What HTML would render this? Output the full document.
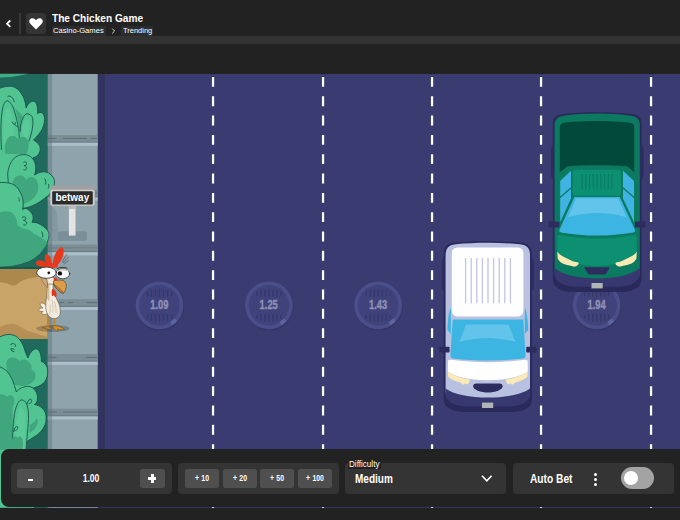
<!DOCTYPE html>
<html>
<head>
<meta charset="utf-8">
<title>The Chicken Game</title>
<style>
*{box-sizing:border-box;margin:0;padding:0}
html,body{width:680px;height:520px;overflow:hidden;background:#222222;font-family:"Liberation Sans",sans-serif;color:#fff}
.abs{position:absolute}
#game{position:absolute;left:0;top:0;width:680px;height:520px}
/* header */
#hdr{position:absolute;left:0;top:0;width:680px;height:36px;background:#222222}
#band{position:absolute;left:0;top:36px;width:680px;height:8px;background:#333333}
#divider{position:absolute;left:19px;top:13px;width:2px;height:21px;background:#393939}
#fav{position:absolute;left:26px;top:13px;width:20px;height:21px;background:#343434;border-radius:3px}
#title{position:absolute;left:52px;top:12px;font-size:11px;font-weight:bold;line-height:13px;white-space:nowrap;transform-origin:0 0;transform:scaleX(.92)}
.crumb{position:absolute;top:26px;height:9.5px;background:#2d2d2d;font-size:8px;line-height:10px;white-space:nowrap;color:#fff}
.crumb span{display:inline-block;transform-origin:0 0}
/* panel */
#panel{position:absolute;left:1px;top:449px;width:700px;height:58px;background:#222222;border-radius:8px}
.grp{position:absolute;top:463px;height:31px;background:#343434;border-radius:4px}
.btn{position:absolute;top:469px;height:19px;background:#4f4f4f;border-radius:2.5px}
.cond{position:absolute;white-space:nowrap;font-weight:bold;transform-origin:50% 50%}
</style>
</head>
<body>
<svg id="game" viewBox="0 0 680 520">
<defs>
<clipPath id="gclip"><rect x="0" y="73.8" width="680" height="433.9"/></clipPath>
</defs>
<g clip-path="url(#gclip)">
<!-- road -->
<rect x="0" y="74" width="680" height="434" fill="#3a3b70"/>
<rect x="97.5" y="74" width="7.5" height="434" fill="#32335f"/>
<!-- lane dashes -->
<g stroke="#ffffff" stroke-width="2.25" stroke-dasharray="9.9 9.43" fill="none">
<path d="M213.05 76.9V520"/><path d="M323.05 76.9V520"/><path d="M432.05 76.9V520"/><path d="M541.05 76.9V520"/><path d="M651.05 76.9V520"/>
</g>
<!-- manholes -->
<g transform="translate(159.5 305.3)">
<circle cx="0.5" cy="1" r="24.2" fill="#30315f" opacity=".55"/>
<circle cx="0" cy="0" r="23.9" fill="#4a4e8a"/>
<circle cx="0" cy="0" r="20.2" fill="#3f427b"/>
<path d="M12.5 19.9A23.5 23.5 0 0 0 17.6 15.6L15 13A19.8 19.8 0 0 1 10.6 16.8Z" fill="#5d62a0"/>
<g stroke="#343767" stroke-width="1.1">
<path d="M-12 -13.5V-9.5M-8 -15.5V-8.5M-4 -16V-8.5M0 -16.5V-8.5M4 -16V-8.5M8 -15.5V-8.5M12 -13.5V-9.5"/>
<path d="M-12 9.5V13.5M-8 8.5V15.5M-4 8.5V16M0 8.5V16.5M4 8.5V16M8 8.5V15.5M12 9.5V13.5"/>
</g>
</g>
<g transform="translate(268.9 305.3)">
<circle cx="0.5" cy="1" r="24.2" fill="#30315f" opacity=".55"/>
<circle cx="0" cy="0" r="23.9" fill="#4a4e8a"/>
<circle cx="0" cy="0" r="20.2" fill="#3f427b"/>
<path d="M12.5 19.9A23.5 23.5 0 0 0 17.6 15.6L15 13A19.8 19.8 0 0 1 10.6 16.8Z" fill="#5d62a0"/>
<g stroke="#343767" stroke-width="1.1">
<path d="M-12 -13.5V-9.5M-8 -15.5V-8.5M-4 -16V-8.5M0 -16.5V-8.5M4 -16V-8.5M8 -15.5V-8.5M12 -13.5V-9.5"/>
<path d="M-12 9.5V13.5M-8 8.5V15.5M-4 8.5V16M0 8.5V16.5M4 8.5V16M8 8.5V15.5M12 9.5V13.5"/>
</g>
</g>
<g transform="translate(378.2 305.3)">
<circle cx="0.5" cy="1" r="24.2" fill="#30315f" opacity=".55"/>
<circle cx="0" cy="0" r="23.9" fill="#4a4e8a"/>
<circle cx="0" cy="0" r="20.2" fill="#3f427b"/>
<path d="M12.5 19.9A23.5 23.5 0 0 0 17.6 15.6L15 13A19.8 19.8 0 0 1 10.6 16.8Z" fill="#5d62a0"/>
<g stroke="#343767" stroke-width="1.1">
<path d="M-12 -13.5V-9.5M-8 -15.5V-8.5M-4 -16V-8.5M0 -16.5V-8.5M4 -16V-8.5M8 -15.5V-8.5M12 -13.5V-9.5"/>
<path d="M-12 9.5V13.5M-8 8.5V15.5M-4 8.5V16M0 8.5V16.5M4 8.5V16M8 8.5V15.5M12 9.5V13.5"/>
</g>
</g>
<g transform="translate(596.7 305.3)">
<circle cx="0.5" cy="1" r="24.2" fill="#30315f" opacity=".55"/>
<circle cx="0" cy="0" r="23.9" fill="#4a4e8a"/>
<circle cx="0" cy="0" r="20.2" fill="#3f427b"/>
<path d="M12.5 19.9A23.5 23.5 0 0 0 17.6 15.6L15 13A19.8 19.8 0 0 1 10.6 16.8Z" fill="#5d62a0"/>
<g stroke="#343767" stroke-width="1.1">
<path d="M-12 -13.5V-9.5M-8 -15.5V-8.5M-4 -16V-8.5M0 -16.5V-8.5M4 -16V-8.5M8 -15.5V-8.5M12 -13.5V-9.5"/>
<path d="M-12 9.5V13.5M-8 8.5V15.5M-4 8.5V16M0 8.5V16.5M4 8.5V16M8 8.5V15.5M12 9.5V13.5"/>
</g>
</g>
<g font-family="Liberation Sans, sans-serif" font-weight="bold" font-size="12" fill="#8f90b5" stroke="#8f90b5" stroke-width=".4" text-anchor="middle">
<text transform="translate(159.4 309.4) scale(.78 1)">1.09</text>
<text transform="translate(268.7 309.4) scale(.78 1)">1.25</text>
<text transform="translate(378.1 309.4) scale(.78 1)">1.43</text>
<text transform="translate(596.6 309.4) scale(.78 1)">1.94</text>
</g>
<!-- green truck -->
<g id="truck">
<path d="M552.8 124C552.8 117.6 556 114.8 563 114C585 111.6 610 111.6 632 114C638.5 114.8 641.6 117.6 641.6 124V279C641.6 287 634 291.6 622 292H572C560 291.6 552.8 287 552.8 279Z" fill="#292a5a"/>
<path d="M550.8 150C550.8 146 553 145 555 146V178C553 179 550.8 178 550.8 174Z" fill="#2c2d5e"/>
<path d="M643.6 150C643.6 146 641.4 145 639.4 146V178C641.4 179 643.6 178 643.6 174Z" fill="#2c2d5e"/>
<path d="M554.6 125C554.6 119.5 557.5 116.6 563.5 115.7C585 112.8 610 112.8 631 115.7C637 116.6 639.8 119.5 639.8 125V272C639.8 280 632 284 620 284.5H574C562 284 554.6 280 554.6 272Z" fill="#0b7a61"/>
<path d="M559.8 128C559.8 124.5 561.5 123 565 122.6C586 120.6 608 120.6 629 122.6C632.5 123 634.2 124.5 634.2 128V172.3L627 166.2C610 164.8 584 164.8 567.5 166.2L559.8 172.3Z" fill="#02493b"/>
<rect x="572.7" y="169.7" width="48.4" height="26" rx="3" fill="#0d8f71"/>
<path d="M582.20 174V189.6M585.93 174V189.6M589.65 174V189.6M593.38 174V189.6M597.10 174V189.6M600.83 174V189.6M604.55 174V189.6M608.28 174V189.6M612.00 174V189.6" stroke="#0b7b62" stroke-width="1.1" fill="none"/>
<path d="M560.2 181L571 170.8V187L560.2 196.4Z" fill="#3fb4e2"/>
<path d="M560.2 198.2L571 188.8V198.6L560.2 222Z" fill="#3fb4e2"/>
<path d="M634 181L623 170.8V187L634 196.4Z" fill="#3fb4e2"/>
<path d="M634 198.2L623 188.8V198.6L634 222Z" fill="#3fb4e2"/>
<path d="M574.4 197H619.8L635 229.8C635.5 231.2 634.9 232.1 633.4 232.4C610 236.5 584 236.5 561 232.4C559.5 232.1 558.9 231.2 559.4 229.8Z" fill="#3db5e3"/>
<path d="M576 198.6H618.2L626.5 217.2C607 211.6 588 211.6 568 217.2Z" fill="#63c4eb"/>
<rect x="548.4" y="221.6" width="11" height="5.8" rx="1" fill="#2c2d5e"/>
<rect x="634.8" y="221.6" width="11" height="5.8" rx="1" fill="#2c2d5e"/>
<path d="M557.3 237C557.3 235.5 558.5 234.7 560 235C584 239.8 610 239.8 634 235C635.5 234.7 636.8 235.5 636.8 237V254C630 262 610 266 597 266C584 266 564 262 557.3 254Z" fill="#0d9071"/>
<path d="M557.3 251.7C559.5 254.5 562 256.3 565 257.5C568 258.8 570.5 260 572.7 261.3C575 262 577 262.3 578.5 262.7C578.8 264 578.3 264.8 577.5 265.2C576.5 266.2 575.5 266.6 574.6 266.5C573 266.5 572 266.2 570.8 265.8C567.5 265.4 564.5 264.5 562.1 263.3C560 262 558.5 260.3 557.7 258.5Z" fill="#fbe9b4"/>
<path d="M636.8 251.7C634.6 254.5 632.1 256.3 629.1 257.5C626.1 258.8 623.6 260.0 621.4 261.3C619.1 262.0 617.1 262.3 615.6 262.7C615.3 264.0 615.8 264.8 616.6 265.2C617.6 266.2 618.6 266.6 619.5 266.5C621.1 266.5 622.1 266.2 623.3 265.8C626.6 265.4 629.6 264.5 632.0 263.3C634.1 262.0 635.6 260.3 636.4 258.5Z" fill="#fbe9b4"/>
<path d="M584.2 267.2H609.8L606.4 273.2C606 274 605.4 274.4 604.5 274.4H589.5C588.6 274.4 588 274 587.6 273.2Z" fill="#2c2d5e"/>
<path d="M554.6 268C562 275 580 278.5 597.2 278.5C614 278.5 632 275 639.8 268V274C639.8 282 630 286.6 618 286.8H576C564 286.6 554.6 282 554.6 274Z" fill="#37386f"/>
<rect x="591.5" y="283" width="11.2" height="5.4" fill="#aeb4b8"/>
</g>
<!-- white van -->
<g id="van">
<path d="M443.6 254C443.6 247.3 447 243.4 455 242.6C476 240.9 500 240.9 520 242.6C528.5 243.4 532 247.3 532 254V399C532 407.5 524 411.6 512 412H464C452 411.6 443.6 407.5 443.6 399Z" fill="#292a5a"/>
<path d="M441.8 262C441.8 258 444 257 446 258V290C444 291 441.8 290 441.8 286Z" fill="#2c2d5e"/>
<path d="M533.8 262C533.8 258 531.6 257 529.6 258V290C531.6 291 533.8 290 533.8 286Z" fill="#2c2d5e"/>
<path d="M445.6 255C445.6 248.5 448.5 245 455.5 244.2C476 242.2 500 242.2 520 244.2C527 245 530 248.5 530 255V392C530 400 522 404 510 404.5H466C454 404 445.6 400 445.6 392Z" fill="#b9c1e1"/>
<rect x="451.8" y="247.4" width="71.6" height="69" rx="5.5" fill="#ffffff"/>
<path d="M465.60 258V303.3M471.20 258V303.3M476.80 258V303.3M482.40 258V303.3M488.00 258V303.3M493.60 258V303.3M499.20 258V303.3M504.80 258V303.3M510.40 258V303.3" stroke="#c1c7e5" stroke-width="1.35" fill="none"/>
<path d="M447.4 330C447.6 320 448.8 312 450.8 307.5V334Z" fill="#3db5e3"/>
<path d="M528.2 330C528 320 526.8 312 524.8 307.5V334Z" fill="#3db5e3"/>
<path d="M452.7 319.5H523.3L525.6 355.5C525.7 357.3 525 358.2 523.3 358.4C500 361.2 476 361.2 452.7 358.4C451 358.2 450.3 357.3 450.4 355.5Z" fill="#3db5e3"/>
<path d="M466 324.6H508.5L515.5 342C498 336.6 478 336.6 459.5 342Z" fill="#63c4eb"/>
<rect x="439.2" y="346.8" width="10.4" height="5.8" rx="1" fill="#2c2d5e"/>
<rect x="526.2" y="346.8" width="10.4" height="5.8" rx="1" fill="#2c2d5e"/>
<path d="M447.9 362C447.9 360.4 449 359.6 450.6 359.8C476 363 500 363 525 359.8C526.6 359.6 527.7 360.4 527.7 362V371.6C520.6 376.5 507.6 380.2 487.8 380.2C468 380.2 455 376.5 447.9 371.6Z" fill="#ffffff"/>
<path d="M447.9 371.6C451.5 374.3 458 377.3 465 378.7L469.7 379.6C469.8 381 469.4 381.6 469.3 381.6C468.8 383.6 468 384.3 467.4 384.2C466.4 384.2 465.6 383.6 465.1 383.2C464.4 384.2 463.6 384.5 462.8 384.4C461.8 384 461 383 460.5 382.4C457.5 381.8 455 380.8 453.5 380C451 378.8 449 377.6 448.1 376.7Z" fill="#fbe9b8"/>
<path d="M527.7 371.6C524.1 374.3 517.6 377.3 510.6 378.7L505.9 379.6C505.8 381.0 506.2 381.6 506.3 381.6C506.8 383.6 507.6 384.3 508.2 384.2C509.2 384.2 510.0 383.6 510.5 383.2C511.2 384.2 512.0 384.5 512.8 384.4C513.8 384.0 514.6 383.0 515.1 382.4C518.1 381.8 520.6 380.8 522.1 380.0C524.6 378.8 526.6 377.6 527.5 376.7Z" fill="#fbe9b8"/>
<path d="M476.3 383.6H499.5C501.5 383.6 502.6 384.8 502.6 386.2C502.6 388 501 389.4 498.5 390.4C495 391.8 491 392.5 487.9 392.5C484.8 392.5 480.8 391.8 477.3 390.4C474.8 389.4 473.2 388 473.2 386.2C473.2 384.8 474.3 383.6 476.3 383.6Z" fill="#2c2d5e"/>
<path d="M445.6 388.5C453 394.5 471 397.6 487.8 397.6C504.6 397.6 522.6 394.5 530 388.5V394.5C530 402 520 406.3 508 406.5H468C456 406.3 445.6 402 445.6 394.5Z" fill="#37386f"/>
<rect x="482" y="402.6" width="11.2" height="5.4" fill="#aeb4b8"/>
</g>
<!-- sidewalk -->
<rect x="47.5" y="74" width="50.2" height="434" fill="#8ea3ab"/>
<rect x="47.5" y="135.0" width="50.2" height="7.6" fill="#7b8e95"/><rect x="47.5" y="141.7" width="50.2" height="1" fill="#66777e"/><rect x="47.5" y="142.7" width="50.2" height="3.2" fill="#aabfc9"/><rect x="48" y="137.9" width="8.4" height="1" fill="#5f7077" opacity="1"/><rect x="63" y="137.9" width="24.0" height="1" fill="#5f7077" opacity="1"/><rect x="90.8" y="137.9" width="6.8" height="1" fill="#5f7077" opacity="1"/>
<rect x="47.5" y="189.7" width="50.2" height="7.6" fill="#7b8e95"/><rect x="47.5" y="196.4" width="50.2" height="1" fill="#66777e"/><rect x="47.5" y="197.4" width="50.2" height="3.2" fill="#aabfc9"/><rect x="47.5" y="192.6" width="8.5" height="1" fill="#5f7077" opacity="1"/><rect x="62" y="192.6" width="18.0" height="1" fill="#5f7077" opacity="1"/><rect x="88" y="192.6" width="9.6" height="1" fill="#5f7077" opacity="1"/>
<rect x="47.5" y="244.5" width="50.2" height="7.6" fill="#7b8e95"/><rect x="47.5" y="251.2" width="50.2" height="1" fill="#66777e"/><rect x="47.5" y="252.2" width="50.2" height="3.2" fill="#aabfc9"/><rect x="47.5" y="247.4" width="50.1" height="1" fill="#5f7077" opacity=".45"/>
<rect x="47.5" y="299.2" width="50.2" height="7.6" fill="#7b8e95"/><rect x="47.5" y="305.9" width="50.2" height="1" fill="#66777e"/><rect x="47.5" y="306.9" width="50.2" height="3.2" fill="#aabfc9"/><rect x="47.5" y="302.1" width="16.4" height="1" fill="#5f7077" opacity="1"/><rect x="68" y="302.1" width="5.6" height="1" fill="#5f7077" opacity="1"/><rect x="86.2" y="302.1" width="11.4" height="1" fill="#5f7077" opacity="1"/>
<rect x="47.5" y="354.0" width="50.2" height="7.6" fill="#7b8e95"/><rect x="47.5" y="360.7" width="50.2" height="1" fill="#66777e"/><rect x="47.5" y="361.7" width="50.2" height="3.2" fill="#aabfc9"/><rect x="47.5" y="356.9" width="9.0" height="1" fill="#5f7077" opacity="1"/><rect x="86" y="356.9" width="11.5" height="1" fill="#5f7077" opacity="1"/>
<rect x="47.5" y="408.7" width="50.2" height="7.6" fill="#7b8e95"/><rect x="47.5" y="415.4" width="50.2" height="1" fill="#66777e"/><rect x="47.5" y="416.4" width="50.2" height="3.2" fill="#aabfc9"/><rect x="47.5" y="411.6" width="9.3" height="1" fill="#5f7077" opacity="1"/><rect x="63.4" y="411.6" width="34.2" height="1" fill="#5f7077" opacity="1"/>
<rect x="47.5" y="463.4" width="50.2" height="7.6" fill="#7b8e95"/><rect x="47.5" y="470.1" width="50.2" height="1" fill="#66777e"/><rect x="47.5" y="471.1" width="50.2" height="3.2" fill="#aabfc9"/><rect x="47.5" y="466.3" width="12.5" height="1" fill="#5f7077" opacity="1"/><rect x="70" y="466.3" width="27.6" height="1" fill="#5f7077" opacity="1"/>
<rect x="47.5" y="74" width="4.6" height="434" fill="#5d7078" opacity=".42"/>
<!-- grass -->
<rect x="0" y="74" width="47.5" height="434" fill="#1f6a5c"/>
<g id="veg" stroke="#17544a" stroke-width="0.9" stroke-linejoin="round">
<ellipse cx="0" cy="40" rx="62" ry="37.6" fill="#3fae84" stroke="none"/>
<!-- dirt path -->
<g stroke="none">
<rect x="0" y="267" width="47.6" height="3" fill="#1a584c"/>
<rect x="0" y="269" width="47.6" height="69.8" fill="#c9a468"/>
<path d="M0 269H47.6V276.5C44 276.6 41 276.7 38 276.9C35 277.2 31 278 28.5 278.6C26 279.3 24 280 22.5 280.3C20.5 281.5 19 283 18 283.4C16 285 14.5 285.6 13 285.5C10 285.3 8 283.5 5 283C3 282.5 1.5 282.2 0 282Z" fill="#ad884d"/>
<path d="M0 338.8H47.6V337C44 336 41 335 39 334.6C35 333 30 331.5 26 330.3C22 328 18 324.5 13 323.8C9 323.5 4 325.5 0 326.8Z" fill="#b58f55"/>
</g>
<!-- Bush A back -->
<path d="M-2 89C2 87 7 86 11.5 86.3C16 87 19 90 21 93C24 97 25.5 102 26.2 108C27.5 104 30.5 101 33.5 101.2C36.5 101.8 38 106 37.6 113.6C39 112.3 41 112 42.3 113C44 114.5 44.8 117 44.6 119.7C44.6 123 43.5 126.5 42 129.5C40 133 37 136.5 33.6 140C36 141.5 38.5 143.5 39.6 145.5C40.6 148 40.5 151 39 153.5C37.5 156 35.5 157.3 33 157.8L22 175L14 192L-2 192Z" fill="#52c492"/>
<!-- A shade -->
<path d="M14.5 107C16.5 110 19 112 21 114C22 115 23 116.5 23.3 118C22 121 21.3 125 21 131H19.3C18.8 123 17.2 114 14.5 107Z" fill="#3fa67d" stroke="none"/>
<!-- A tall left lobe -->
<path d="M1.5 150C0.5 135 0.8 118 2.3 110C3.2 104.5 5 101 7 100.8C9.5 100.8 12 104.5 13.5 108.5C15.5 114 17.5 122 18.5 128.5C19.2 133 19.4 137 19.2 140" fill="#52c492"/>
<path d="M4 146C3 135 3.2 122 4.5 114C5.3 110 6.3 108 7.6 108C9.2 108.2 10.6 111 11.6 115C13 121 13.8 130 13.8 138C12 143 8 146 4 146Z" fill="#5bca99" stroke="none"/>
<!-- A middle lobe -->
<path d="M20.2 132C20.2 126 21.3 121 23 118C24 115.5 25.5 113.8 27 113.8C29.5 113.8 32 115.5 32.7 118.5C33.4 123 32.6 128 31.7 132C30.8 136 29.7 139 28.8 141.5" fill="#52c492"/>
<path d="M22.3 132C22.5 127 23.5 122.5 25 120.3C26 119 27.2 118.6 28.3 119.2C29.8 120.3 30.2 123.5 29.8 127.5C29.4 132 28 137 26.8 140C24.5 138 22.6 135.5 22.3 132Z" fill="#5bca99" stroke="none"/>
<path d="M5.5 154C3.8 148 4.8 140 9.5 136.6C13 134.5 16.5 136.3 17.8 139.6C19.8 136.5 24.5 136 27 139C29.6 142.5 29 149 26.5 154Z" fill="#3fa67d" stroke="none"/>
<path d="M12 121.5C12.4 123 13.4 124.5 14.6 124.5C15.4 124.4 15.6 123 15 122M15.2 124.5C15.8 126 16.8 127 17.8 126.3" fill="none"/>
<path d="M7.5 96.5C9 95.5 11 96 12.5 98C13.6 99.5 14.2 101 14.3 102" fill="none"/>
<!-- Bush B top lobe + right lobe -->
<path d="M7.7 174C8 169 9.5 165 11.5 161.5C14 157.5 17.5 155.3 21 154.8C25 154.3 28.5 155 30.8 156.7C33.5 158.8 35 162 35.6 165.4C36 168.5 35.6 172 34.6 175C36.5 173.5 40 172 43.5 171.8C47 171.6 50.5 173.5 52.9 177C54.3 179 54.8 181.5 54.4 183.7C54.2 186.5 53.4 189 52 191C50.3 193.8 48 196.2 45 198C42.5 200 39.5 202.3 36.5 203.8C33.5 205.5 30 206.8 27 207.7L10 210Z" fill="#52c492"/>
<path d="M12.5 186C12 181 14.5 176.5 19 175.6C22.5 175 25 177 26.3 180C28 177 31.5 176 34.5 178C38.5 181 39.3 187 37.5 192C35.5 197 31 201 26 203C22.5 204.5 18.5 205 15 204Z" fill="#3fa67d" stroke="none"/>
<path d="M23.5 162.5C25 161.3 26.6 162 26.6 163.6C26.6 165 25 165.8 24 165.5C25.6 165.8 27 167 26.6 168.6C26.2 170 24.5 170.3 23.5 169.6" fill="none"/>
<path d="M44.5 178.5C45.8 180 46.2 182.5 45.5 184.5M48.5 184C49 185.5 48.8 187.3 48 188.5" fill="none"/>
<!-- Bush B lower-left big lobe -->
<path d="M-2 182.7C3 182.2 8 182.6 11.5 183.6C15 185 17.5 187.5 19.2 190.4C21.2 193.5 22.5 197 23 200C23.4 203 23.3 206.5 22.7 209.6C24 208.3 26 207.8 27.7 209.3C30 210.8 32 213 32.9 215.6C33.5 218 33 220.5 32 222.5C34.5 221.8 37.5 222.8 39.8 224.2C42.5 225.5 45 227.3 46.7 229.4C48.3 231 49 232.8 49 234.6C49 237 48.5 239.5 47.6 241.5C46.5 244.5 45 247 43.3 249.3C41 252.8 38 255.6 34.6 258C32 259.8 29 261.2 26 262.3C22 263.8 18 264.8 13.8 265.4C9 266.2 4 266.6 -2 266.7Z" fill="#52c492"/>
<path d="M-2 213C2 211.3 7 210.8 10.4 212C13.5 213.5 15.6 216 16.4 219C17.2 221.5 17.5 224 17.3 226C19 226.2 20.8 227.3 22.5 228.5C24.8 228.6 27.2 229.2 29.4 230.3C31.2 231 32.6 232.3 33.7 233.7C35.8 234.2 37.8 235.4 39.8 237C42 237.8 44 239 45.8 240.7L47.3 242.4C46.3 245 45 247 43.3 249.3C41 252.8 38 255.6 34.6 258C32 259.8 29 261.2 26 262.3C22 263.8 18 264.8 13.8 265.4C9 266.2 4 266.6 -2 266.7Z" fill="#3fa67d" stroke="none"/>
<path d="M18.5 197.5C19.3 198.7 19.6 200.3 19 201.6" fill="none"/>
<path d="M22 217.5C23.5 216.3 25.5 216.6 25.8 218.2C26 219.6 24.6 220.6 23.5 220.3C25 220.5 26.8 221.6 26.6 223.3C26.3 224.8 24.6 225.4 23.3 224.8" fill="none"/>
<path d="M41.5 231.5C42.5 233 43 235 42.6 237.3" fill="none"/>
<!-- Bush C -->
<path d="M-2 338C0 336.5 5 334.2 9.6 334.4C14 334.8 17 336.5 19.2 339C22 342.5 24 346.5 25 350.8C25.8 353 26.8 355.5 27.9 358C29.5 354 32 349.5 35.6 348.8C38 348.8 39.8 351 40.4 353.7C41.2 356.2 41.5 359 41.3 361.3C43 362 44.3 363 45.2 364.2C47 366 47.8 368.5 47.7 371C47.8 374 47.3 377 46 379.6C44.5 382.8 42 385 38.5 386.3C35.5 387.6 32 388.5 28.8 389L19.2 392L-2 392Z" fill="#52c492"/>
<path d="M6.5 366C5.5 361.5 8 357.8 12 357.6C15.5 357.6 18 359 19.5 361.5C22 358.5 26.5 359 29 362C31.5 364 32 367 31.5 369.5C34 370.5 35.8 373 35.6 376C35.4 380 32 383.5 27.5 385C22 386.8 16 386 12 383C8.5 380 6.8 373 6.5 366Z" fill="#3fa67d" stroke="none"/>
<path d="M10.5 345C11.2 343.5 13.2 343 14.6 344C15.6 344.8 15.8 346.2 15 347M10.8 348.5C11 350.5 12.5 352 14.2 351.6M11 349C12.5 348.6 13.6 348.8 14.5 349.5" fill="none"/>
<!-- Bush D -->
<path d="M-2 366C2 367.5 5.5 369.5 7.7 372C10.5 375.5 12.8 380.5 14.4 385.4C15.3 388 15.8 390 16.3 392C17.2 391 18.2 390 19.2 389.2C22 387.2 25.5 386.2 28.8 386.3C31.8 386.8 34 388.5 35.6 391C37 393.3 37.7 396 37.5 398.8C37.6 401 36.5 403 34.6 404.6C36 404.8 37.3 405.1 38.5 405.6C41.5 407 44 409.5 45.2 412.3C46.3 415 46.3 418.5 45.8 422.3C45 425.5 43.5 428.5 41.3 431C39 433.8 36 436 32.7 437.7C30.8 439 29 440.3 27 441.5L25 452L-2 452Z" fill="#52c492"/>
<path d="M-2 395C1 393.5 5 394 7 397C8.5 394.5 12 394.5 13.5 397C15 400 14.5 404 12.5 407L13 452L-2 452Z" fill="#3fa67d" stroke="none"/>
<path d="M29.5 425C32 424 35.5 421.5 36.5 418C38 419 38.5 422 37 425C35.5 428.5 32.5 431.5 29.5 433Z" fill="#3fa67d" stroke="none"/>
<path d="M-2 450H25C27 460 31 470 32.5 480C34 490 34 500 34 510H-2Z" fill="#52c492" stroke="none"/>
<!-- D tall lobe -->
<path d="M12.5 452C12.3 440 12.8 425 14.4 414.6C15.5 408 17.8 401 21 400C23.5 399.6 25.8 401.5 27 405C28.3 409 28.7 414 28.5 418.5C28.3 425 27.6 432 27 437.7C26.6 442 26.2 447 26 452" fill="#52c492"/>
<path d="M15 452C14.8 440 15.4 428 16.8 419C17.8 413 19.3 408.5 21.3 408C23.3 408 24.6 411 25 415C25.5 421 25.2 430 24.6 438L24 452Z" fill="#5bca99" stroke="none"/>
<path d="M10 452C10 447 11 440 13.5 437C15 435.5 17 436 17.5 438C18.5 436 21 436 22 438C23.5 441 23 447 22 452Z" fill="#3fa67d" stroke="none"/>
<path d="M27 404.5C27.5 402 28.6 399.8 30 399.3C31.3 399 32 400.2 31.6 401.6C31.2 403 30 403.8 28.8 403.6" fill="none"/>
<path d="M13.8 432C14 429.5 15 427 16.5 426.4C17.6 426.2 18 427.5 17.5 428.8C17 430 16 430.6 15.2 430.4" fill="none"/>
</g>
<!-- chicken -->
<g id="chicken" stroke-linejoin="round" stroke-linecap="round">
<ellipse cx="52.8" cy="328.5" rx="16.5" ry="3.4" fill="#000" opacity=".2"/>
<!-- legs -->
<path d="M48 318V327M54.4 318V326" stroke="#c8832b" stroke-width="1.7" fill="none"/>
<path d="M43.2 327.6C45.5 326.6 48 326.6 49 327C50.5 327.4 51.5 328.4 51.2 329.2C48.5 329.4 45.5 329 43.2 327.6Z" fill="#d9922f" stroke="#6b4413" stroke-width=".5"/>
<path d="M52.6 326C55 325.4 58 326 60.5 327C62.5 327.6 64 328.6 64.4 329.6C62 330.2 59 329.6 57 329C58 329.8 58.5 330.6 58 331.2C55.5 330.8 53.5 329 52.6 326Z" fill="#d9922f" stroke="#6b4413" stroke-width=".5"/>
<!-- tail feathers -->
<path d="M46.5 306C44.5 303.5 42 302.3 40 303.5C40.3 305.5 41.5 307 43 308C41 308 39 308.6 38.5 310C39.8 311.2 41.6 311.6 43.2 311.4C42 312 41.4 313 41.7 313.8C43.5 314.8 46 314.8 47.5 313.8Z" fill="#f6f0e6" stroke="#5a4a3a" stroke-width=".5"/>
<!-- body -->
<path d="M47.5 281C47.3 287 47.3 292 46.6 297C45.8 301 45.4 305 45.9 309C46.4 313.5 48.5 317 52 318.3C55.5 319.3 58.8 317.8 60 314.5C60.8 311.5 60.2 307.5 58.8 303.5C57.2 299.5 55 296 53.6 292C53 288.5 53 284.5 53.2 281Z" fill="#f2eadc" stroke="#5a4a3a" stroke-width=".55"/>
<path d="M47.8 283C47.6 289 47.5 294 47 298C47.8 300 48.6 301 49.4 300.5C49.6 295 49.4 289 49.6 283Z" fill="#d6bd98" stroke="none"/>
<path d="M52 300C53 304 53.2 308 52.6 312M54.5 302C55.8 305.5 56.3 309 56 312.5M50 305C50.3 308.5 50.2 311.5 49.8 314" stroke="#b9a58a" stroke-width=".5" fill="none"/>
<!-- wattle -->
<path d="M52.2 289C53.2 288.6 55 289.6 55.8 291.5C56.8 293.6 56.8 296 56 297C54.6 297 54 295.5 53.8 294.5C53.4 296 52.6 296.4 52 296C51.6 293.6 51.6 291 52.2 289Z" fill="#e2361c"/>
<!-- comb -->
<g fill="#e8391d">
<ellipse cx="41.3" cy="263.6" rx="5.6" ry="3.1" transform="rotate(12 41.3 263.6)"/>
<ellipse cx="48.2" cy="260.2" rx="2.9" ry="6.4" transform="rotate(-20 48.2 260.2)"/>
<ellipse cx="58.4" cy="256.8" rx="4" ry="10.2" transform="rotate(23 58.4 256.8)"/>
<path d="M42 265L57 262.5L58 267.5L46 268.5Z"/>
</g>
<!-- lashes -->
<path d="M62.3 262C63.5 259.5 65 256.5 66.8 254.3M63.3 262.8C65 260.5 66.6 258.6 68.3 257.3M64.2 264C65.6 262.6 67 261.4 68.6 260.6" stroke="#2f3540" stroke-width=".45" fill="none"/>
<!-- head -->
<path d="M46 276C46.5 279.5 47 282 47.5 284H53.5C54 281.5 55 279.5 56.5 278.5Z" fill="#f2eadc" stroke="#5a4a3a" stroke-width=".5"/>
<path d="M40.8 276.2C42.5 277.8 45 278.8 47 279.2L47.6 287.5C45.5 286 43.5 283.5 42.2 281C41.4 279.4 41 277.8 40.8 276.2Z" fill="#c9a777" stroke="#5a4a3a" stroke-width=".4"/>
<!-- eyes -->
<path d="M57.5 268.5C60 267 64.5 267 67 268.2" stroke="#2b2b2b" stroke-width=".9" fill="none"/>
<ellipse cx="62.8" cy="273.8" rx="6.9" ry="5" fill="#fff" stroke="#2b2b2b" stroke-width=".8"/>
<path d="M56.5 271.5C58 269.3 61 268.6 63.5 268.8C66 269 68 270.2 69 271.6C66 270.2 60 270 56.5 271.5Z" fill="#c9c3b8"/>
<ellipse cx="46.5" cy="272.7" rx="9.8" ry="5.6" fill="#fff" stroke="#2b2b2b" stroke-width=".8"/>
<circle cx="48.8" cy="272.8" r="1.35" fill="#111"/>
<circle cx="59.9" cy="273.4" r="2.2" fill="#111"/>
<!-- beak -->
<path d="M53.8 280.8C57 279.8 61 279.8 63.6 280.6C65.6 282.5 66.6 284.6 66.3 286.8C65.8 289.6 64.8 292 63.4 293.4C61.5 293 60 292 58.8 290.6C56.6 288.8 54.8 286.6 53.8 284.4Z" fill="#dd9c49" stroke="#4a3216" stroke-width=".55"/>
<path d="M53.8 284.4C56.5 286 60 288.8 62.8 292.2C63 292.6 63.2 293 63.4 293.4C61.5 293 60 292 58.8 290.6C56.6 288.8 54.8 286.6 53.8 284.4Z" fill="#c3853a" stroke="#4a3216" stroke-width=".45"/>
<path d="M53.6 278.4C54.6 277.6 56.4 277.8 57.4 279C57 280.2 55 280.8 53.8 280.4Z" fill="#e2361c"/>
</g>
<!-- sign -->
<path d="M48 206C52 206 56 208 57 214L58 232C58 238 60 240 64 241L48 241Z" fill="#6f838b" opacity=".35"/>
<rect x="58" y="231.3" width="29" height="9.5" rx="2.5" fill="#7b8f98"/>
<rect x="68.9" y="205" width="6.6" height="30.6" fill="#e3e3e3"/>
<rect x="68.9" y="205" width="6.6" height="4" fill="#b9b9b9"/>
<rect x="50.4" y="185.4" width="44.2" height="20.4" rx="2" fill="#a0a0a0"/>
<rect x="50.4" y="189.8" width="44.2" height="16" rx="2" fill="#cfcfcf"/>
<rect x="52.2" y="191.2" width="40.6" height="13.4" rx="1.2" fill="#2b2b2b"/>
<text transform="translate(72.3 200.6) scale(.95 1)" font-family="Liberation Sans, sans-serif" font-weight="bold" font-size="10.5" fill="#fff" text-anchor="middle">betway</text>
</g>
</svg>

<div id="hdr"></div>
<div id="band"></div>
<svg class="abs" style="left:5px;top:19px" width="8" height="10" viewBox="0 0 8 10"><path d="M5.3 1.5L2 4.65L5.3 7.8" fill="none" stroke="#fff" stroke-width="1.75"/></svg>
<div id="divider"></div>
<div id="fav"></div>
<svg class="abs" style="left:29px;top:18px" width="14" height="12" viewBox="0 0 14 12" preserveAspectRatio="none"><path d="M7 11.4L1.3 5.8C-0.3 4.1 0 1.6 1.7 0.7C3.5-0.3 5.8 0.3 7 2.3C8.2 0.3 10.5-0.3 12.3 0.7C14 1.6 14.3 4.1 12.7 5.8Z" fill="#fff"/></svg>
<div id="title">The Chicken Game</div>
<div class="crumb" style="left:51.5px;width:54px;padding-left:1.5px"><span style="transform:scaleX(.95)">Casino-Games</span></div>
<svg class="abs" style="left:111px;top:28px" width="5" height="6" viewBox="0 0 5 6"><path d="M1.2 0.6L3.6 3L1.2 5.4" fill="none" stroke="#eee" stroke-width="0.9"/></svg>
<div class="crumb" style="left:121px;width:32px;padding-left:1.5px"><span style="transform:scaleX(.935)">Trending</span></div>

<div id="panel"></div>
<!-- group 1 -->
<div class="grp" style="left:11px;width:161px"></div>
<div class="btn" style="left:17px;width:26px"></div>
<div class="abs" style="left:28px;top:478.5px;width:5px;height:2.5px;background:#fff"></div>
<div class="btn" style="left:140px;width:25px"></div>
<div class="abs" style="left:148.2px;top:477.3px;width:8.2px;height:2.5px;background:#fff"></div>
<div class="abs" style="left:151.1px;top:474.2px;width:2.5px;height:8.7px;background:#fff"></div>
<div class="cond" style="left:70px;top:472px;width:42px;text-align:center;font-size:11px;line-height:13px;transform:scaleX(.78)">1.00</div>
<!-- group 2 -->
<div class="grp" style="left:178px;width:161px"></div>
<div class="btn" style="left:185px;width:34px"></div>
<div class="btn" style="left:222.7px;width:34px"></div>
<div class="btn" style="left:260.4px;width:34px"></div>
<div class="btn" style="left:298.2px;width:34.3px"></div>
<div class="cond" style="left:185px;top:472.4px;width:34px;text-align:center;font-size:9.6px;line-height:11px;word-spacing:0.5px;transform:scaleX(.72)">+ 10</div>
<div class="cond" style="left:222.7px;top:472.4px;width:34px;text-align:center;font-size:9.6px;line-height:11px;word-spacing:0.5px;transform:scaleX(.72)">+ 20</div>
<div class="cond" style="left:260.4px;top:472.4px;width:34px;text-align:center;font-size:9.6px;line-height:11px;word-spacing:0.5px;transform:scaleX(.72)">+ 50</div>
<div class="cond" style="left:298.2px;top:472.4px;width:34px;text-align:center;font-size:9.6px;line-height:11px;word-spacing:0.5px;transform:scaleX(.72)">+ 100</div>
<!-- group 3 -->
<div class="grp" style="left:345px;width:161px"></div>
<div class="abs" style="left:347.5px;top:459px;width:33.5px;height:9.6px;background:#222222"></div>
<div class="cond" style="left:349.3px;top:459px;font-size:9px;line-height:10px;font-weight:normal;transform-origin:0 50%;transform:scaleX(.9)">Difficulty</div>
<div class="cond" style="left:355px;top:471px;font-size:13px;line-height:15px;transform-origin:0 50%;transform:scaleX(.77)">Medium</div>
<svg class="abs" style="left:480px;top:474px" width="14" height="10" viewBox="0 0 14 10"><path d="M2 1.8L6.8 6.8L11.6 1.8" fill="none" stroke="#fff" stroke-width="1.6"/></svg>
<!-- group 4 -->
<div class="grp" style="left:513px;width:161px"></div>
<div class="cond" style="left:529.5px;top:471.8px;font-size:12px;line-height:15px;transform-origin:0 50%;transform:scaleX(.85)">Auto Bet</div>
<div class="abs" style="left:594px;top:472.9px;width:3.2px;height:3.2px;border-radius:50%;background:#fff"></div>
<div class="abs" style="left:594px;top:477.7px;width:3.2px;height:3.2px;border-radius:50%;background:#fff"></div>
<div class="abs" style="left:594px;top:482.5px;width:3.2px;height:3.2px;border-radius:50%;background:#fff"></div>
<div class="abs" style="left:621px;top:467px;width:33px;height:22px;border-radius:11px;background:#a3a3a3"></div>
<div class="abs" style="left:624px;top:471px;width:14.2px;height:14.2px;border-radius:50%;background:#fff"></div>
</body>
</html>
